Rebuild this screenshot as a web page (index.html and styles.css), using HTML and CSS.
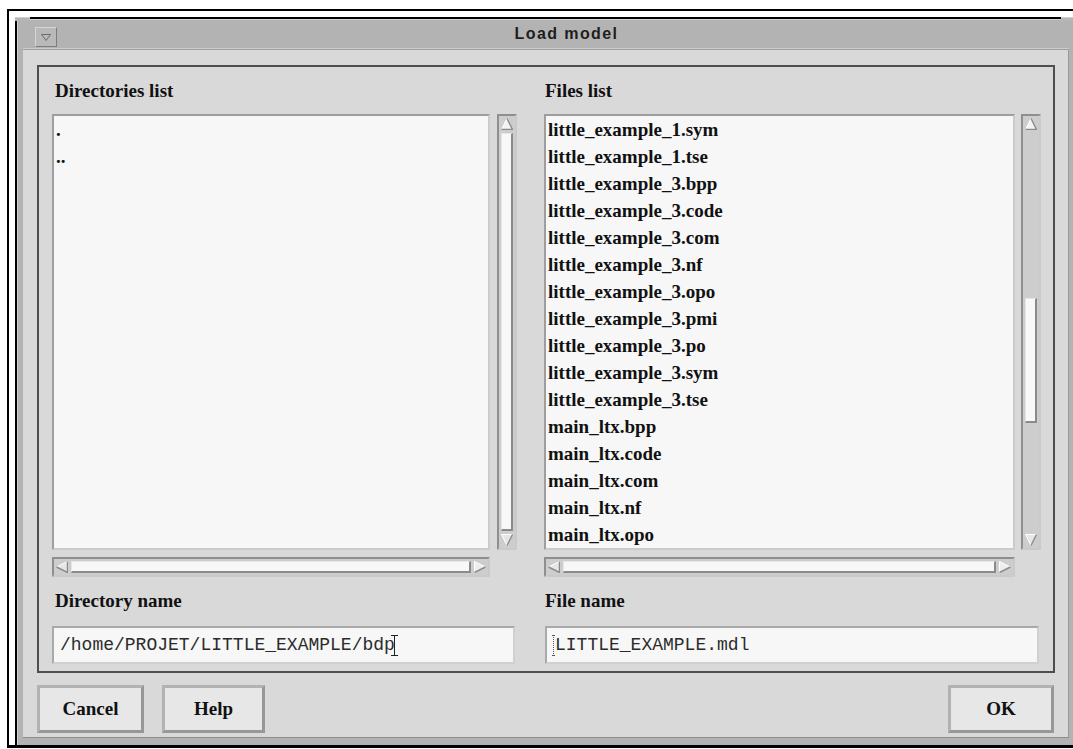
FILE: index.html
```html
<!DOCTYPE html>
<html>
<head>
<meta charset="utf-8">
<title>Load model</title>
<link rel="stylesheet" href="styles.css">
</head>
<body>
<div class="screen">
  <div class="window">
    <span class="corner corner-tl"></span>
    <span class="corner corner-tr"></span>
    <div class="frame">
      <div class="titlebar">
        <button class="menu-btn" aria-label="Window menu">
          <svg width="10" height="7" viewBox="0 0 10 7"><polygon points="0.5,0.5 9.5,0.5 5,6.5" fill="none" stroke="#6c6c6c"/></svg>
        </button>
        <div class="title">Load model</div>
      </div>
      <div class="client">
        <div class="panel">
          <!-- directories column -->
          <div class="col col-dirs">
            <div class="label label-left">Directories list</div>
            <ul class="list">
              <li>.</li>
              <li>..</li>
            </ul>
            <div class="vscroll">
              <svg class="arr" width="12" height="12" viewBox="0 0 12 12"><polygon points="6,0.5 11.5,11.5 0.5,11.5" fill="#f3f3f3"/><polyline points="0.5,11.5 6,0.5" fill="none" stroke="#ffffff"/><polyline points="6,0.5 11.5,11.5 0.5,11.5" fill="none" stroke="#8a8a8a" stroke-width="1.4"/></svg>
              <div class="track">
                <div class="thumb" style="flex-grow:1"></div>
              </div>
              <svg class="arr" width="12" height="12" viewBox="0 0 12 12"><polygon points="0.5,0.5 11.5,0.5 6,11.5" fill="#e6e6e6"/><polyline points="6,11.5 0.5,0.5 11.5,0.5" fill="none" stroke="#ffffff"/><polyline points="11.5,0.5 6,11.5" fill="none" stroke="#8a8a8a" stroke-width="1.4"/></svg>
            </div>
            <div class="hscroll">
              <svg class="arr" width="12" height="12" viewBox="0 0 12 12"><polygon points="0.5,6 11.5,0.5 11.5,11.5" fill="#e6e6e6"/><polyline points="0.5,6 11.5,0.5" fill="none" stroke="#ffffff"/><polyline points="11.5,0.5 11.5,11.5 0.5,6" fill="none" stroke="#8a8a8a" stroke-width="1.4"/></svg>
              <div class="htrack">
                <div class="thumb" style="flex-grow:1"></div>
              </div>
              <svg class="arr" width="12" height="12" viewBox="0 0 12 12"><polygon points="0.5,0.5 11.5,6 0.5,11.5" fill="#eeeeee"/><polyline points="0.5,11.5 0.5,0.5 11.5,6" fill="none" stroke="#ffffff"/><polyline points="11.5,6 0.5,11.5" fill="none" stroke="#8a8a8a" stroke-width="1.4"/></svg>
            </div>
            <div class="label label-left label-field">Directory name</div>
            <div class="field field-left">/home/PROJET/LITTLE_EXAMPLE/bdp<span class="caret"></span></div>
          </div>

          <!-- files column -->
          <div class="col col-files">
            <div class="label label-right">Files list</div>
            <ul class="list">
              <li>little_example_1.sym</li>
              <li>little_example_1.tse</li>
              <li>little_example_3.bpp</li>
              <li>little_example_3.code</li>
              <li>little_example_3.com</li>
              <li>little_example_3.nf</li>
              <li>little_example_3.opo</li>
              <li>little_example_3.pmi</li>
              <li>little_example_3.po</li>
              <li>little_example_3.sym</li>
              <li>little_example_3.tse</li>
              <li>main_ltx.bpp</li>
              <li>main_ltx.code</li>
              <li>main_ltx.com</li>
              <li>main_ltx.nf</li>
              <li>main_ltx.opo</li>
            </ul>
            <div class="vscroll">
              <svg class="arr" width="12" height="12" viewBox="0 0 12 12"><polygon points="6,0.5 11.5,11.5 0.5,11.5" fill="#f3f3f3"/><polyline points="0.5,11.5 6,0.5" fill="none" stroke="#ffffff"/><polyline points="6,0.5 11.5,11.5 0.5,11.5" fill="none" stroke="#8a8a8a" stroke-width="1.4"/></svg>
              <div class="track">
                <div class="gap" style="flex-grow:167"></div>
                <div class="thumb" style="flex-grow:123"></div>
                <div class="gap" style="flex-grow:109"></div>
              </div>
              <svg class="arr" width="12" height="12" viewBox="0 0 12 12"><polygon points="0.5,0.5 11.5,0.5 6,11.5" fill="#e6e6e6"/><polyline points="6,11.5 0.5,0.5 11.5,0.5" fill="none" stroke="#ffffff"/><polyline points="11.5,0.5 6,11.5" fill="none" stroke="#8a8a8a" stroke-width="1.4"/></svg>
            </div>
            <div class="hscroll">
              <svg class="arr" width="12" height="12" viewBox="0 0 12 12"><polygon points="0.5,6 11.5,0.5 11.5,11.5" fill="#e6e6e6"/><polyline points="0.5,6 11.5,0.5" fill="none" stroke="#ffffff"/><polyline points="11.5,0.5 11.5,11.5 0.5,6" fill="none" stroke="#8a8a8a" stroke-width="1.4"/></svg>
              <div class="htrack">
                <div class="thumb" style="flex-grow:1"></div>
              </div>
              <svg class="arr" width="12" height="12" viewBox="0 0 12 12"><polygon points="0.5,0.5 11.5,6 0.5,11.5" fill="#eeeeee"/><polyline points="0.5,11.5 0.5,0.5 11.5,6" fill="none" stroke="#ffffff"/><polyline points="11.5,6 0.5,11.5" fill="none" stroke="#8a8a8a" stroke-width="1.4"/></svg>
            </div>
            <div class="label label-right label-field">File name</div>
            <div class="field field-right"><span class="caret caret-idle"></span>LITTLE_EXAMPLE.mdl</div>
          </div>
        </div>

        <div class="buttons">
          <button class="btn btn-cancel">Cancel</button>
          <button class="btn btn-help">Help</button>
          <button class="btn btn-ok">OK</button>
        </div>
      </div>
    </div>
  </div>
</div>
</body>
</html>
```

FILE: styles.css
```css
* {
  box-sizing: border-box;
}

html,
body {
  margin: 0;
  padding: 0;
  overflow: hidden;
  background: #ffffff;
}

body {
  padding: 9px 0 0 7px;
  font-family: "Liberation Serif", "Times New Roman", serif;
  color: #111111;
}

/* black outline of the display area */
.screen {
  width: 1067px;
  border-top: 2px solid #000000;
  border-left: 2px solid #000000;
  border-bottom: 3px solid #000000;
  padding: 6px 0 0 6px;
}

/* window manager decoration */
.window {
  position: relative;
  border-top: 2px solid #000000;
  border-left: 2px solid #000000;
}

.corner {
  position: absolute;
  background: #b6b6b6;
}

.corner-tl {
  top: -2px;
  left: -2px;
  width: 15px;
  height: 4px;
  border-top: 1px solid #d0d0d0;
}

.corner-tr {
  top: -2px;
  right: 0;
  width: 13px;
  height: 4px;
  border-top: 1px solid #d0d0d0;
}

.frame {
  background: #b3b3b3;
  border-top: 1px solid #d2d2d2;
  border-left: 1px solid #d2d2d2;
  padding: 2px 5px 7px 5px;
}

.titlebar {
  display: flex;
  height: 27px;
  padding-left: 12px;
  background: #b3b3b3;
  border-bottom: 1px solid #cdcdcd;
}

.menu-btn {
  width: 22px;
  height: 20px;
  margin-top: 5px;
  padding: 0;
  display: flex;
  align-items: center;
  justify-content: center;
  background: #b9b9b9;
  border: 1px solid;
  border-color: #d6d6d6 #7c7c7c #7c7c7c #d6d6d6;
}

.title {
  flex: 1;
  padding-left: 7px;
  text-align: center;
  font: bold 16px/23px "Liberation Sans", Arial, sans-serif;
  letter-spacing: 1.4px;
  color: #1e1e1e;
}

/* dialog client area */
.client {
  background: #d9d9d9;
  border-top: 1px solid #9e9e9e;
  border-right: 1px solid #9a9a9a;
  border-bottom: 1px solid #8e8e8e;
}

.panel {
  margin: 15px 13px 0 14px;
  border: 2px solid #4e4e4e;
  padding: 13px 12px 7px 13px;
  display: flex;
  gap: 27px;
}

.col {
  display: grid;
  align-content: start;
}

.col-dirs {
  grid-template-columns: 438px 20px;
  column-gap: 7px;
}

.col-files {
  grid-template-columns: 471px 20px;
  column-gap: 6px;
}

.label {
  grid-column: 1 / -1;
  height: 22px;
  margin-bottom: 12px;
  font: bold 19px/22px "Liberation Serif", "Times New Roman", serif;
  color: #111111;
  white-space: nowrap;
}

.label-left {
  padding-left: 3px;
}

.label-right {
  padding-left: 1px;
}

.label-field {
  margin: 13px 0 0 0;
}

/* list boxes */
.list {
  list-style: none;
  margin: 0;
  padding: 0 2px;
  height: 436px;
  overflow: hidden;
  background: #f7f7f7;
  border: 2px solid;
  border-color: #9e9e9e #cbcbcb #cbcbcb #9e9e9e;
  font: bold 19px/27px "Liberation Serif", "Times New Roman", serif;
  color: #111111;
  white-space: nowrap;
}

/* scrollbars */
.vscroll,
.hscroll {
  display: flex;
  align-items: center;
  padding: 2px;
  background: #cdcdcd;
  border: 2px solid;
  border-color: #8f8f8f #cacaca #cacaca #8f8f8f;
}

.vscroll {
  flex-direction: column;
  height: 436px;
}

.hscroll {
  height: 20px;
  margin-top: 7px;
}

.arr {
  display: block;
  flex: none;
}

.track {
  flex: 1;
  width: 12px;
  margin: 3px 0;
  display: flex;
  flex-direction: column;
}

.htrack {
  flex: 1;
  height: 12px;
  margin: 0 3px;
  display: flex;
}

.gap {
  flex-basis: 0;
}

.thumb {
  flex-basis: 0;
  background: #f8f8f8;
  border-style: solid;
  border-width: 1px 2px 2px 1px;
  border-color: #e6e6e6 #8a8a8a #8a8a8a #e6e6e6;
}

/* text fields */
.field {
  grid-column: 1 / -1;
  height: 38px;
  margin: 14px 2px 0 0;
  display: flex;
  align-items: center;
  background: #f7f7f7;
  border: 2px solid;
  border-color: #a9a9a9 #d0d0d0 #d0d0d0 #a9a9a9;
  font: 18px/22px "Liberation Mono", "Courier New", monospace;
  color: #2b2b2b;
  white-space: pre;
}

.field-left {
  padding-left: 6px;
}

.field-right {
  padding-left: 5px;
  margin-left: 1px;
}

/* I-beam insertion cursor */
.caret {
  display: inline-block;
  width: 7px;
  height: 21px;
  margin-left: -4px;
  background:
    linear-gradient(#222222, #222222) center / 1px 100% no-repeat,
    linear-gradient(#222222, #222222) top / 7px 1px no-repeat,
    linear-gradient(#222222, #222222) bottom / 7px 1px no-repeat;
}

.caret-idle {
  width: 3px;
  margin-left: 0;
  background:
    repeating-linear-gradient(#555555 0 1px, transparent 1px 2px) center / 1px 100% no-repeat,
    linear-gradient(#555555, #555555) top / 3px 1px no-repeat,
    linear-gradient(#555555, #555555) bottom / 3px 1px no-repeat;
}

/* action buttons */
.buttons {
  display: flex;
  gap: 18px;
  margin-top: 12px;
  padding: 0 14px 4px 14px;
}

.btn {
  height: 48px;
  padding: 0;
  background: #e7e7e7;
  border: 3px solid;
  border-color: #b2b2b2 #979797 #979797 #b2b2b2;
  font: bold 19px/22px "Liberation Serif", "Times New Roman", serif;
  color: #111111;
}

.btn-cancel {
  width: 107px;
}

.btn-help {
  width: 103px;
}

.btn-ok {
  width: 106px;
  margin-left: auto;
}
```
